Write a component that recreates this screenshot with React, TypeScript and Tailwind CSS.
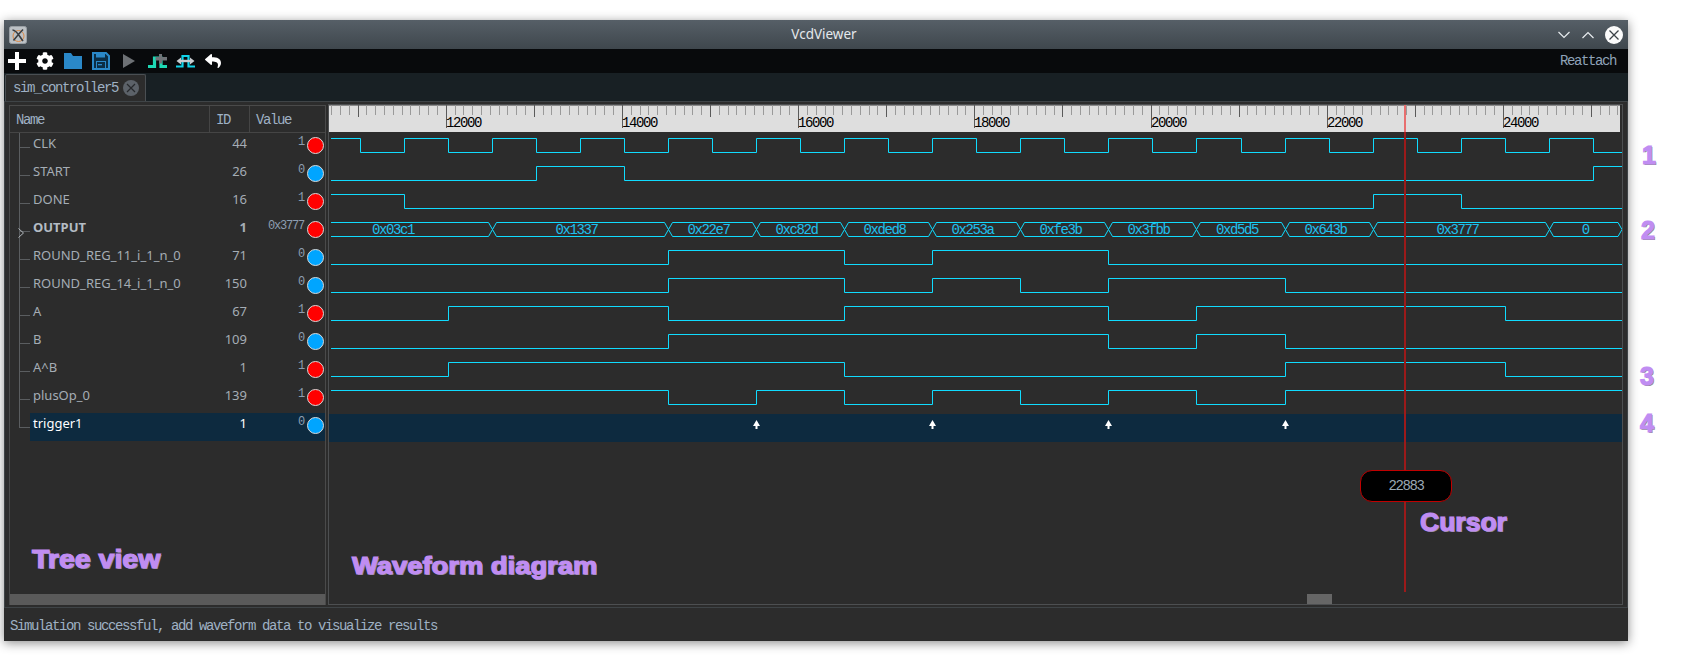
import React from "react";
import { FaCog, FaReply } from "react-icons/fa";

const MONO = "font-['Liberation_Mono',monospace] tracking-[-1.4px]";
const NOTE =
  "absolute origin-left font-['Liberation_Sans',sans-serif] font-bold text-[#c08df2] [-webkit-text-stroke:1.2px_#c08df2] [text-shadow:1px_1px_0_#8a8a8a] leading-none whitespace-nowrap";

const WAVE = "#10dcff";
const ex = (n: number) => Math.round(359.5 + 44.05 * n) + 0.5;
const X0 = 331;
const X1 = 1622;

type Row = { name: string; id: number; val: string; bold?: boolean; sel?: boolean; on: boolean };
const rows: Row[] = [
  { name: "CLK", id: 44, val: "1", on: true },
  { name: "START", id: 26, val: "0", on: false },
  { name: "DONE", id: 16, val: "1", on: true },
  { name: "OUTPUT", id: 1, val: "0x3777", bold: true, on: true },
  { name: "ROUND_REG_11_i_1_n_0", id: 71, val: "0", on: false },
  { name: "ROUND_REG_14_i_1_n_0", id: 150, val: "0", on: false },
  { name: "A", id: 67, val: "1", on: true },
  { name: "B", id: 109, val: "0", on: false },
  { name: "A^B", id: 1, val: "1", on: true },
  { name: "plusOp_0", id: 139, val: "1", on: true },
  { name: "trigger1", id: 1, val: "0", sel: true, on: false },
];

const digital: { row: number; init: number; edges: number[] }[] = [
  { row: 0, init: 1, edges: Array.from({ length: 29 }, (_, i) => i) },
  { row: 1, init: 0, edges: [4, 6, 28] },
  { row: 2, init: 1, edges: [1, 23, 25] },
  { row: 4, init: 0, edges: [7, 11, 13, 17] },
  { row: 5, init: 0, edges: [7, 11, 13, 15, 17, 21] },
  { row: 6, init: 0, edges: [2, 7, 11, 17, 19, 26] },
  { row: 7, init: 0, edges: [7, 17, 19, 21] },
  { row: 8, init: 0, edges: [2, 11, 21, 26] },
  { row: 9, init: 1, edges: [7, 9, 11, 13, 15, 17, 19, 21] },
];

const wavePath = (row: number, init: number, edges: number[]) => {
  const hi = 138.5 + 28 * row;
  const lo = 152.5 + 28 * row;
  let level = init;
  let d = `M${X0} ${level ? hi : lo}`;
  for (const e of edges) {
    const x = ex(e);
    d += `H${x}`;
    level = 1 - level;
    d += `V${level ? hi : lo}`;
  }
  return d + `H${X1}`;
};

const busEdges = [3, 7, 9, 11, 13, 15, 17, 19, 21, 23, 27];
const busVals = ["0x03c1", "0x1337", "0x22e7", "0xc82d", "0xded8", "0x253a", "0xfe3b", "0x3fbb", "0xd5d5", "0x643b", "0x3777", "0"];

function Bus() {
  const top = 222.5;
  const bot = 236.5;
  const mid = (top + bot) / 2;
  const xs = [X0 - 3, ...busEdges.map(ex), X1 + 1];
  return (
    <g>
      {busVals.map((v, i) => {
        const a = xs[i];
        const b = xs[i + 1];
        const first = i === 0;
        const last = i === busVals.length - 1;
        const la = first ? X0 : a + 4;
        const rb = last ? X1 - 4 : b - 4;
        const d = first
          ? `M${la} ${top}H${rb}L${b} ${mid}L${rb} ${bot}H${la}`
          : last
            ? `M${a} ${mid}L${la} ${top}H${rb}L${X1} ${mid}L${rb} ${bot}H${la}Z`
            : `M${a} ${mid}L${la} ${top}H${rb}L${b} ${mid}L${rb} ${bot}H${la}Z`;
        const cx = first ? 393 : last ? (a + b) / 2 - 1 : (a + b) / 2 - 4;
        return (
          <g key={i}>
            <path d={d} fill="none" stroke={WAVE} strokeWidth={1} />
            <text x={cx} y={234} textAnchor="middle" fill="#1fc0ee" className={`${MONO} text-[14px]`}>
              {v}
            </text>
          </g>
        );
      })}
    </g>
  );
}

function Ruler() {
  const ticks: React.ReactNode[] = [];
  for (let k = -13; k <= 133; k++) {
    const x = Math.round(445.7 + k * 8.81) + 0.5;
    const major = k % 10 === 0;
    const label = k % 20 === 0;
    ticks.push(
      <line key={k} x1={x} x2={x} y1={105} y2={label ? 128 : major ? 117 : 115} stroke={major ? "#5a5a5a" : "#9a9a9a"} strokeWidth={1} />
    );
  }
  return (
    <g>
      <rect x={329} y={105} width={1291} height={27} fill="#dedede" />
      <rect x={329} y={105} width={1291} height={1} fill="#8a8a8a" />
      {ticks}
      {[12000, 14000, 16000, 18000, 20000, 22000, 24000].map((t) => (
        <text key={t} x={Math.round(445.7 + (t - 12000) * 0.0881)} y={127} fill="#000" className={`${MONO} text-[14px]`}>
          {t}
        </text>
      ))}
    </g>
  );
}

function Waves() {
  return (
    <svg viewBox="329 105 1293 499" width={1293} height={499} className="block">
      <Ruler />
      <rect x={329} y={414} width={1293} height={28} fill="#0d2a3f" />
      {digital.map((s) => (
        <path key={s.row} d={wavePath(s.row, s.init, s.edges)} fill="none" stroke={WAVE} strokeWidth={1} />
      ))}
      <Bus />
      {[9, 13, 17, 21].map((n) => {
        const x = ex(n);
        return <path key={n} d={`M${x} 420L${x + 3.5} 426H${x + 1}V429H${x - 1}V426H${x - 3.5}Z`} fill="#fff" />;
      })}
      <rect x={1404} y={105} width={2} height={27} fill="#e86f6f" />
      <rect x={1404} y={132} width={2} height={460} fill="#9c1a1a" />
    </svg>
  );
}

function WindowIcon() {
  return (
    <svg width="18" height="18" viewBox="0 0 18 18">
      <rect x="0.5" y="0.5" width="17" height="17" rx="2" fill="#bcc1c5" stroke="#9aa0a5" />
      <circle cx="9.5" cy="10" r="5.5" fill="none" stroke="#dc8a48" strokeWidth="1" />
      <path d="M3.5 4C7.5 4 9.5 9 14 15M14 3.5C10.5 7 8 10 4.5 14.5" fill="none" stroke="#3a3d41" strokeWidth="1.6" />
    </svg>
  );
}

function PlusIcon() {
  return (
    <svg width="18" height="18" viewBox="0 0 18 18">
      <path d="M7 0H11V7H18V11H11V18H7V11H0V7H7Z" fill="#fff" />
    </svg>
  );
}

function FolderIcon() {
  return (
    <svg width="18" height="16" viewBox="0 0 18 16">
      <path d="M0 0H7L9 3H18V16H0Z" fill="#2a88c8" />
    </svg>
  );
}

function SaveIcon() {
  return (
    <svg width="18" height="18" viewBox="0 0 18 18">
      <path d="M1 1H14L17 4V17H1Z" fill="#0b2d44" stroke="#2a88c8" strokeWidth="2" />
      <rect x="4" y="1" width="9" height="4.5" fill="#2a88c8" />
      <rect x="4" y="9" width="10" height="8" fill="#2a88c8" />
      <rect x="5" y="10" width="8" height="6" fill="#0b2d44" />
      <rect x="6" y="12" width="4" height="1.3" fill="#2a88c8" />
    </svg>
  );
}

function WaveAddIcon() {
  return (
    <svg width="19" height="15" viewBox="0 0 19 15">
      <path d="M0 12.5H6.5V4H13V12.5H19" fill="none" stroke="#1dd8b4" strokeWidth="3.2" />
      <path d="M11 0H14V3H19V6.5H14V9.5H11V6.5H7.5V3H11Z" fill="#6f7478" />
    </svg>
  );
}

function SwapIcon() {
  return (
    <svg width="19" height="13" viewBox="0 0 19 13">
      <path d="M0 11.5H6.5V1H12.5V11.5H19" fill="none" stroke="#10d4ea" strokeWidth="2.2" />
      <path d="M0.5 6L5 2.5V9.5ZM18.5 6L14 2.5V9.5Z" fill="#c8ccd0" />
      <path d="M4 6H15" stroke="#c8ccd0" strokeWidth="2.4" />
    </svg>
  );
}

function TreeConnector({ last }: { last: boolean }) {
  return (
    <div className="ml-[9px] flex w-[11px] shrink-0 flex-col self-stretch">
      <div className="h-[15px] border-b border-l border-[#5a5d60]" />
      {!last && <div className="flex-1 border-l border-[#5a5d60]" />}
    </div>
  );
}

function TreeRow({ r, last }: { r: Row; last: boolean }) {
  return (
    <div className="relative flex h-[28px] shrink-0">
      <TreeConnector last={last} />
      {r.bold && (
        <svg width="6" height="10" viewBox="0 0 6 10" className="absolute left-[8px] top-[11px]">
          <path d="M0.5 0.5L5.5 5L0.5 9.5" fill="none" stroke="#b0b6bb" strokeWidth="1" />
        </svg>
      )}
      <div className={`flex flex-1 ${r.sel ? "bg-[#0d2a3f]" : ""}`}>
        <div
          className={`flex w-[180px] items-center pb-[7px] pl-[3px] text-[13px] ${r.sel ? "text-white" : "text-[#a5adb5]"} ${r.bold ? "font-bold text-[#b4bcc4]" : ""}`}
        >
          {r.name}
        </div>
        <div
          className={`flex w-[37px] items-center justify-end pb-[6px] text-[13px] ${r.sel ? "text-white" : "text-[#a5adb5]"} ${r.bold ? "font-bold" : ""}`}
        >
          {r.id}
        </div>
        <div className="flex w-[57px] items-center justify-end pb-[10px] font-['Liberation_Mono',monospace] text-[12px] tracking-[-1.2px] text-[#8c9db0]">
          {r.val}
        </div>
        <div className="ml-[3px] flex items-center pb-[4px]">
          <div className={`h-[17px] w-[17px] rounded-full border border-[#d8d8d8] ${r.on ? "bg-[#ff0000]" : "bg-[#00a5ff]"}`} />
        </div>
      </div>
    </div>
  );
}

export default function App() {
  return (
    <div className="relative h-[661px] w-[1684px] overflow-hidden bg-white font-['Noto_Sans',sans-serif]">
      <div className="ml-[4px] pt-[20px]">
        <div className="flex h-[621px] w-[1624px] flex-col bg-[#2c2c2c] shadow-[0_2px_10px_rgba(0,0,0,0.45)]">
          {/* title bar */}
          <div className="flex h-[29px] shrink-0 items-center bg-gradient-to-b from-[#565f67] to-[#3f474d] pl-[5px] pr-[5px]">
            <WindowIcon />
            <div className="flex-1 pl-[64px] text-center text-[13.5px] text-[#e4e8ec]">VcdViewer</div>
            <div className="flex items-center gap-[10px]">
              <svg width="14" height="8" viewBox="0 0 14 8">
                <path d="M1.5 1L7 6.5L12.5 1" fill="none" stroke="#e8ecef" strokeWidth="1.2" />
              </svg>
              <svg width="14" height="8" viewBox="0 0 14 8">
                <path d="M1.5 7L7 1.5L12.5 7" fill="none" stroke="#e8ecef" strokeWidth="1.2" />
              </svg>
              <svg width="18" height="18" viewBox="0 0 18 18">
                <circle cx="9" cy="9" r="9" fill="#fbfbfb" />
                <path d="M4.5 4.5L13.5 13.5M13.5 4.5L4.5 13.5" stroke="#3c4247" strokeWidth="1.3" />
              </svg>
            </div>
          </div>
          {/* toolbar */}
          <div className="flex h-[24px] shrink-0 items-center bg-[#080a0c] pl-[4px] pr-[12px]">
            <div className="flex w-[28px]"><PlusIcon /></div>
            <div className="flex w-[28px]"><FaCog size={18} color="#ffffff" /></div>
            <div className="flex w-[28px]"><FolderIcon /></div>
            <div className="flex w-[31px]"><SaveIcon /></div>
            <div className="flex w-[25px]">
              <svg width="12" height="14" viewBox="0 0 12 14">
                <path d="M0 0L12 7L0 14Z" fill="#6d7175" />
              </svg>
            </div>
            <div className="flex w-[28px]"><WaveAddIcon /></div>
            <div className="flex w-[29px]"><SwapIcon /></div>
            <div className="flex"><FaReply size={16} color="#ffffff" /></div>
            <div className={`ml-auto text-[14px] text-[#8fa3b8] ${MONO}`}>Reattach</div>
          </div>
          {/* tabs */}
          <div className="flex h-[28px] shrink-0 items-end bg-[#182024] pl-[1px]">
            <div className={`flex h-[27px] w-[141px] items-center rounded-t-[2px] border border-b-0 border-[#4a4f53] bg-[#2c2c2c] pl-[7px] text-[14px] text-[#9fb1c4] ${MONO}`}>
              <span className="pt-[1px]">sim_controller5</span>
              <svg width="16" height="16" viewBox="0 0 16 16" className="ml-[5px]">
                <circle cx="8" cy="8" r="8" fill="#5c6269" />
                <path d="M4 4L12 12M12 4L4 12" stroke="#26292c" strokeWidth="1.2" />
              </svg>
            </div>
          </div>
          {/* main frame */}
          <div className="flex h-[507px] shrink-0 gap-[2px] border-b border-l border-r border-t border-[#3f4447] pl-[4px] pt-[2px]">
            <div className="mt-[1px] flex h-[500px] w-[317px] flex-col border-l border-r border-t border-[#4a4a4a] bg-[#2c2c2c]">
              <div className={`flex h-[27px] shrink-0 border-b border-[#454545] text-[14px] text-[#9fb1c4] ${MONO}`}>
                <div className="flex w-[200px] items-center border-r border-[#454545] pl-[6px] pt-[3px]">Name</div>
                <div className="flex w-[40px] items-center border-r border-[#454545] pl-[6px] pt-[3px]">ID</div>
                <div className="flex flex-1 items-center pl-[6px] pt-[3px]">Value</div>
              </div>
              {rows.map((r, i) => (
                <TreeRow key={r.name} r={r} last={i === rows.length - 1} />
              ))}
              <div className="flex-1" />
              <div className="h-[11px] shrink-0 bg-[#5a5a5a]" />
            </div>
            <div className="relative h-[501px] w-[1295px] border border-[#4d4f51] bg-[#2c2c2c]">
              <Waves />
              <div className="absolute left-[1031px] top-[365px] flex h-[32px] w-[92px] items-center justify-center rounded-[12px] border border-[#c00000] bg-black">
                <span className={`text-[14px] text-[#9aa8b4] ${MONO}`}>22883</span>
              </div>
              <div className="absolute bottom-0 left-[978px] h-[10px] w-[25px] bg-[#666666]" />
            </div>
          </div>
          {/* status */}
          <div className={`flex flex-1 items-center pl-[6px] pt-[4px] text-[14px] text-[#9fb1c4] ${MONO}`}>
            Simulation successful, add waveform data to visualize results
          </div>
        </div>
      </div>
      {/* annotations */}
      <div className={`${NOTE} left-[32px] top-[547px] scale-x-[1.14] text-[25px]`}>Tree view</div>
      <div className={`${NOTE} left-[352px] top-[554px] scale-x-[1.14] text-[24px]`}>Waveform diagram</div>
      <div className={`${NOTE} left-[1420px] top-[510px] scale-x-[1.06] text-[25px]`}>Cursor</div>
      <div className={`${NOTE} left-[1642px] top-[143px] text-[25px]`}>1</div>
      <div className={`${NOTE} left-[1641px] top-[218px] text-[25px]`}>2</div>
      <div className={`${NOTE} left-[1640px] top-[364px] text-[25px]`}>3</div>
      <div className={`${NOTE} left-[1640px] top-[411px] text-[25px]`}>4</div>
    </div>
  );
}
